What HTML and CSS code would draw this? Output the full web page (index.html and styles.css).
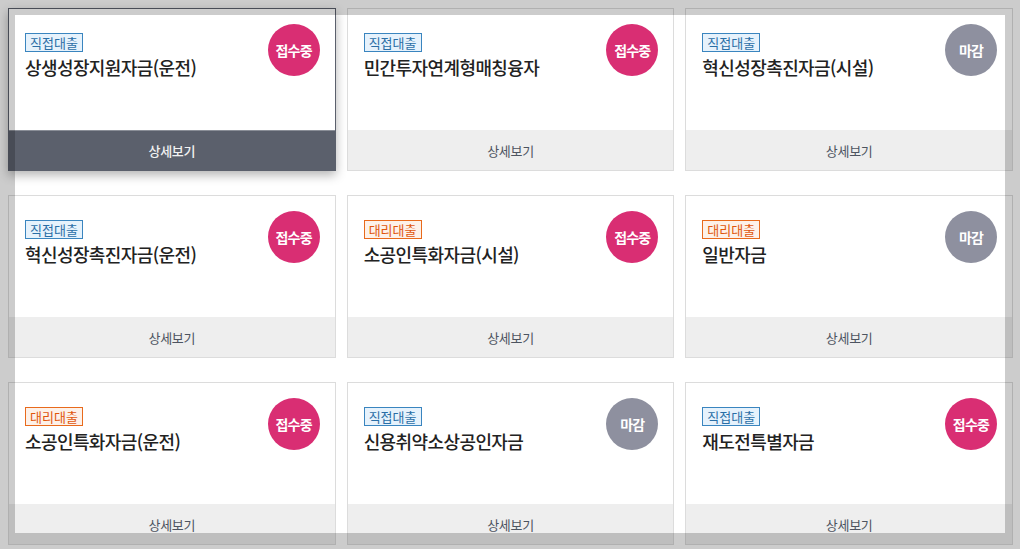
FILE: index.html
```html
<!DOCTYPE html>
<html lang="ko">
<head>
<meta charset="utf-8">
<title>자금 목록</title>
<link rel="stylesheet" href="styles.css">
</head>
<body>
<div class="grid">
  <div class="card is-hover">
    <div class="card-body">
      <div class="info"><span class="tag tag-direct">직접대출</span><p class="title">상생성장지원자금(운전)</p></div>
      <span class="status status-open">접수중</span>
    </div>
    <div class="card-foot">상세보기</div>
  </div>
  <div class="card">
    <div class="card-body">
      <div class="info"><span class="tag tag-direct">직접대출</span><p class="title">민간투자연계형매칭융자</p></div>
      <span class="status status-open">접수중</span>
    </div>
    <div class="card-foot">상세보기</div>
  </div>
  <div class="card">
    <div class="card-body">
      <div class="info"><span class="tag tag-direct">직접대출</span><p class="title">혁신성장촉진자금(시설)</p></div>
      <span class="status status-closed">마감</span>
    </div>
    <div class="card-foot">상세보기</div>
  </div>
  <div class="card">
    <div class="card-body">
      <div class="info"><span class="tag tag-direct">직접대출</span><p class="title">혁신성장촉진자금(운전)</p></div>
      <span class="status status-open">접수중</span>
    </div>
    <div class="card-foot">상세보기</div>
  </div>
  <div class="card">
    <div class="card-body">
      <div class="info"><span class="tag tag-agent">대리대출</span><p class="title">소공인특화자금(시설)</p></div>
      <span class="status status-open">접수중</span>
    </div>
    <div class="card-foot">상세보기</div>
  </div>
  <div class="card">
    <div class="card-body">
      <div class="info"><span class="tag tag-agent">대리대출</span><p class="title">일반자금</p></div>
      <span class="status status-closed">마감</span>
    </div>
    <div class="card-foot">상세보기</div>
  </div>
  <div class="card">
    <div class="card-body">
      <div class="info"><span class="tag tag-agent">대리대출</span><p class="title">소공인특화자금(운전)</p></div>
      <span class="status status-open">접수중</span>
    </div>
    <div class="card-foot">상세보기</div>
  </div>
  <div class="card">
    <div class="card-body">
      <div class="info"><span class="tag tag-direct">직접대출</span><p class="title">신용취약소상공인자금</p></div>
      <span class="status status-closed">마감</span>
    </div>
    <div class="card-foot">상세보기</div>
  </div>
  <div class="card">
    <div class="card-body">
      <div class="info"><span class="tag tag-direct">직접대출</span><p class="title">재도전특별자금</p></div>
      <span class="status status-open">접수중</span>
    </div>
    <div class="card-foot">상세보기</div>
  </div>
</div>
<div class="frame"></div>
</body>
</html>
```

FILE: styles.css
```css
* { box-sizing: border-box; }
html, body { margin: 0; padding: 0; background: #fff; }
body {
  padding: 8px 8px 0 8px;
  font-family: "Noto Sans CJK KR", "Noto Sans", sans-serif;
  color: #222;
  overflow: hidden;
}
.grid {
  display: grid;
  grid-template-columns: repeat(3, 1fr);
  column-gap: 11px;
  row-gap: 24px;
  width: 1005px;
}
.card {
  border: 1px solid #dcdcdc;
  background: #fff;
  height: 163px;
  display: flex;
  flex-direction: column;
}
.card-body {
  flex: 1;
  display: flex;
  justify-content: space-between;
  align-items: flex-start;
  padding: 15px 15px 0 16px;
}
.info {
  padding-top: 9px;
  display: flex;
  flex-direction: column;
  align-items: flex-start;
}
.tag {
  display: block;
  font-size: 13px;
  line-height: 17px;
  padding: 0 4px;
  border: 1px solid;
  letter-spacing: 0;
}
.tag-direct { color: #2a6ea6; border-color: #3a85bf; background: #e6f2fc; }
.tag-agent { color: #e0560c; border-color: #e86a1c; background: #fdf1e9; }
.title {
  margin: 3px 0 0;
  font-size: 18px;
  line-height: 24px;
  font-weight: 500;
  letter-spacing: -0.6px;
  color: #222;
}
.status {
  width: 52px;
  height: 52px;
  border-radius: 50%;
  display: flex;
  align-items: center;
  justify-content: center;
  color: #fff;
  font-size: 14px;
  font-weight: 700;
  letter-spacing: -0.8px;
  flex: none;
}
.status-open { background: #d92e73; }
.status-closed { background: #8e909f; }
.card-foot {
  height: 40px;
  background: #eeeeee;
  display: flex;
  align-items: center;
  justify-content: center;
  font-size: 13px;
  color: #4d5460;
  letter-spacing: -0.3px;
}
.card.is-hover {
  border-color: #5b606c;
  box-shadow: 0 4px 10px rgba(0, 0, 0, 0.3);
  position: relative;
}
.card.is-hover .card-foot {
  background: #5b606c;
  color: #f2f2f2;
  font-weight: 500;
  border-top: 1px solid #8a8e97;
}
.frame {
  position: fixed;
  left: 15px;
  top: 15px;
  width: 990px;
  height: 518px;
  box-shadow: 0 0 0 2000px rgba(0, 0, 0, 0.2);
  pointer-events: none;
}
```
